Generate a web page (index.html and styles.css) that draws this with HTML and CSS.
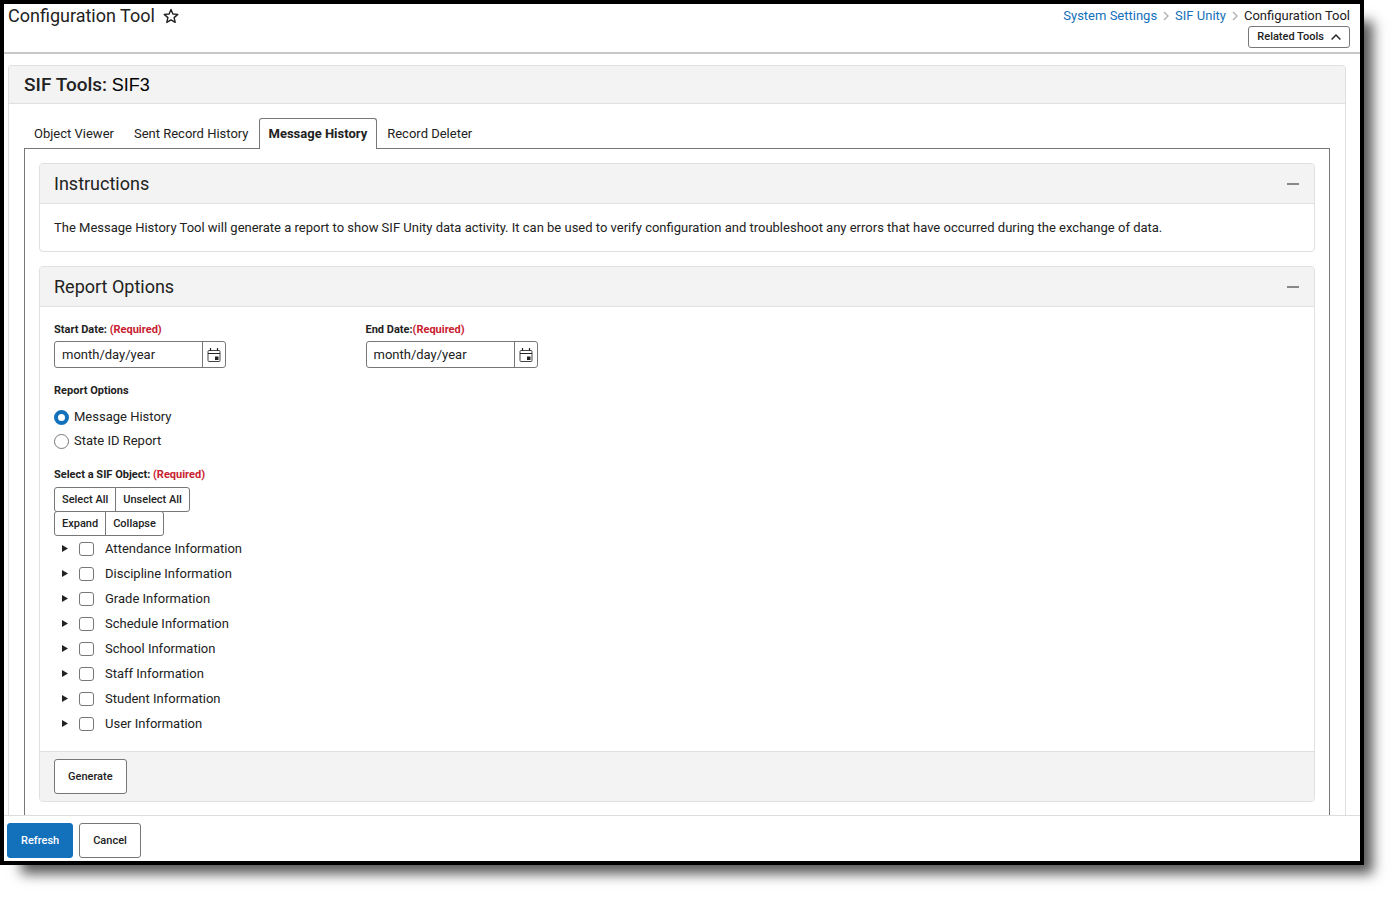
FILE: index.html
```
<!DOCTYPE html>
<html lang="en">
<head>
    <meta charset="UTF-8">
    <meta name="viewport" content="width=device-width, initial-scale=1.0">
    <title>Configuration Tool</title>
    <link rel="stylesheet" href="styles.css">
</head>
<body>
    <div class="window">
        <header class="topbar">
            <div class="title">
                <h1>Configuration Tool</h1>
                <button class="icon-button" type="button" aria-label="Add to favorites">
                    <svg width="16" height="16" viewBox="0 0 16 16"><path d="M8 1.500l1.900 4.500 4.900.400-3.700 3.200 1.100 4.800L8 11.900l-4.200 2.500 1.100-4.800L1.200 6.400l4.900-.4z" fill="none" stroke="#222" stroke-width="1.400" stroke-linejoin="round"/></svg>
                </button>
            </div>
            <div class="topbar-right">
                <nav class="breadcrumbs">
                    <a href="#">System Settings</a>
                    <svg width="6" height="10" viewBox="0 0 6 10"><path d="M1 1l4 4-4 4" fill="none" stroke="#b5b5b5" stroke-width="1.500"/></svg>
                    <a href="#">SIF Unity</a>
                    <svg width="6" height="10" viewBox="0 0 6 10"><path d="M1 1l4 4-4 4" fill="none" stroke="#b5b5b5" stroke-width="1.500"/></svg>
                    <span>Configuration Tool</span>
                </nav>
                <button class="button related" type="button">
                    Related Tools
                    <svg width="10" height="6" viewBox="0 0 10 6"><path d="M.6 5.400L5 1l4.400 4.400" fill="none" stroke="#222" stroke-width="1.400"/></svg>
                </button>
            </div>
        </header>

        <main class="content">
            <section class="panel">
                <h2 class="panel-header">SIF Tools: <span>SIF3</span></h2>
                <div class="panel-body">
                    <div class="tabs" role="tablist">
                        <button class="tab" type="button" role="tab">Object Viewer</button>
                        <button class="tab" type="button" role="tab">Sent Record History</button>
                        <button class="tab active" type="button" role="tab" aria-selected="true">Message History</button>
                        <button class="tab" type="button" role="tab">Record Deleter</button>
                    </div>
                    <div class="tab-panel">
                        <section class="card">
                            <div class="card-header">
                                <h3>Instructions</h3>
                                <button class="icon-button collapse" type="button" aria-label="Collapse Instructions"></button>
                            </div>
                            <p class="instructions">The Message History Tool will generate a report to show SIF Unity data activity. It can be used to verify configuration and troubleshoot any errors that have occurred during the exchange of data.</p>
                        </section>

                        <form class="card">
                            <div class="card-header">
                                <h3>Report Options</h3>
                                <button class="icon-button collapse" type="button" aria-label="Collapse Report Options"></button>
                            </div>
                            <div class="card-body">
                                <div class="dates">
                                    <div>
                                        <label class="label" for="start">Start Date: <span class="required">(Required)</span></label>
                                        <div class="date-box">
                                            <input type="text" id="start" placeholder="month/day/year">
                                            <button type="button" aria-label="Open start date calendar">
                                                <svg width="14" height="14" viewBox="0 0 14 14"><rect x="1" y="2.500" width="12" height="11" rx="1" fill="none" stroke="#444"/><path d="M1 5.500h12M3.500 0v3M10.500 0v3" stroke="#222" stroke-width="1.200"/><path d="M8 8.500h3.500V12H8z" fill="#222"/></svg>
                                            </button>
                                        </div>
                                    </div>
                                    <div>
                                        <label class="label" for="end">End Date:<span class="required">(Required)</span></label>
                                        <div class="date-box">
                                            <input type="text" id="end" placeholder="month/day/year">
                                            <button type="button" aria-label="Open end date calendar">
                                                <svg width="14" height="14" viewBox="0 0 14 14"><rect x="1" y="2.500" width="12" height="11" rx="1" fill="none" stroke="#444"/><path d="M1 5.500h12M3.500 0v3M10.500 0v3" stroke="#222" stroke-width="1.200"/><path d="M8 8.500h3.500V12H8z" fill="#222"/></svg>
                                            </button>
                                        </div>
                                    </div>
                                </div>

                                <fieldset class="radios">
                                    <legend class="label">Report Options</legend>
                                    <label><input type="radio" name="report" checked>Message History</label>
                                    <label><input type="radio" name="report">State ID Report</label>
                                </fieldset>

                                <fieldset class="objects">
                                    <legend class="label">Select a SIF Object: <span class="required">(Required)</span></legend>
                                    <div class="button-group">
                                        <button type="button">Select All</button>
                                        <button type="button">Unselect All</button>
                                    </div>
                                    <div class="button-group">
                                        <button type="button">Expand</button>
                                        <button type="button">Collapse</button>
                                    </div>
                                    <ul class="tree">
                                        <li><button class="arrow" type="button" aria-label="Expand Attendance"></button><label><input type="checkbox">Attendance Information</label></li>
                                        <li><button class="arrow" type="button" aria-label="Expand Discipline"></button><label><input type="checkbox">Discipline Information</label></li>
                                        <li><button class="arrow" type="button" aria-label="Expand Grade"></button><label><input type="checkbox">Grade Information</label></li>
                                        <li><button class="arrow" type="button" aria-label="Expand Schedule"></button><label><input type="checkbox">Schedule Information</label></li>
                                        <li><button class="arrow" type="button" aria-label="Expand School"></button><label><input type="checkbox">School Information</label></li>
                                        <li><button class="arrow" type="button" aria-label="Expand Staff"></button><label><input type="checkbox">Staff Information</label></li>
                                        <li><button class="arrow" type="button" aria-label="Expand Student"></button><label><input type="checkbox">Student Information</label></li>
                                        <li><button class="arrow" type="button" aria-label="Expand User"></button><label><input type="checkbox">User Information</label></li>
                                    </ul>
                                </fieldset>
                            </div>
                            <div class="card-footer">
                                <button class="button" type="button">Generate</button>
                            </div>
                        </form>
                    </div>
                </div>
            </section>
        </main>

        <footer class="actions">
            <button class="button primary" type="button">Refresh</button>
            <button class="button" type="button">Cancel</button>
        </footer>
    </div>
</body>
</html>
```
FILE: styles.css
```
* {
    box-sizing: border-box;
}

body {
    margin: 0;
    padding: 0 34px 34px 0;
    background: #fff;
    color: #222;
    font: 13px/20px Roboto, sans-serif;
}

h1, h2, h3, p, ul, fieldset {
    margin: 0;
    padding: 0;
    border: 0;
}

button, input {
    font: inherit;
    color: inherit;
    margin: 0;
}

a {
    color: #1370bb;
    text-decoration: none;
}

/* Window frame */
.window {
    display: flex;
    flex-direction: column;
    height: calc(100vh - 34px);
    border: 4px solid #000;
    background: #fff;
    box-shadow: 15px 15px 12px -6px rgba(0, 0, 0, 0.65);
}

.topbar {
    display: flex;
    justify-content: space-between;
    flex: none;
    height: 50px;
    padding: 0 10px 0 4px;
    border-bottom: 2px solid #c8c8c8;
}

.title {
    display: flex;
    align-items: center;
    gap: 8px;
    height: 24px;
}

h1, h3 {
    font-size: 18px;
    font-weight: 400;
    line-height: 24px;
}

.icon-button {
    display: flex;
    padding: 0;
    border: 0;
    background: none;
}

.topbar-right {
    display: flex;
    flex-direction: column;
    align-items: flex-end;
    padding-top: 2px;
}

.breadcrumbs {
    display: flex;
    align-items: center;
    gap: 6px;
}

.button {
    height: 35px;
    padding: 0 13px;
    border: 1px solid #777;
    border-radius: 3px;
    background: #fff;
    font-size: 11px;
    font-weight: 500;
}

.related {
    display: flex;
    align-items: center;
    gap: 7px;
    height: 22px;
    padding: 0 8px;
}

.primary {
    border-color: #1370bb;
    background: #1370bb;
    color: #fff;
}

/* Main panel */
.content {
    flex: 1;
    min-height: 0;
    overflow: hidden;
    padding: 11px 14px 0 4px;
}

.panel {
    border: 1px solid #e0e0e0;
    border-radius: 3px;
}

.panel-header {
    height: 38px;
    padding: 0 15px;
    border-bottom: 1px solid #e0e0e0;
    background: #f3f3f3;
    font-size: 19px;
    font-weight: 500;
    line-height: 37px;
}

.panel-header span {
    color: #000;
    font: 18px "Liberation Sans", Arial, sans-serif;
}

.panel-body {
    padding: 14px 15px 0;
}

.tabs {
    display: flex;
    margin-bottom: -1px;
}

.tab {
    height: 31px;
    padding: 0 9px;
    border: 1px solid transparent;
    border-bottom: 0;
    border-radius: 3px 3px 0 0;
    background: none;
}

.active {
    position: relative;
    border-color: #777;
    background: #fff;
    font-weight: 700;
}

.tab-panel {
    display: flex;
    flex-direction: column;
    gap: 14px;
    padding: 14px 14px 40px;
    border: 1px solid #777;
}

/* Cards */
.card {
    overflow: hidden;
    border: 1px solid #e0e0e0;
    border-radius: 4px;
}

.card-header {
    display: flex;
    justify-content: space-between;
    align-items: center;
    height: 40px;
    padding: 0 14px;
    border-bottom: 1px solid #e0e0e0;
    background: #f3f3f3;
}

.collapse {
    width: 14px;
    height: 14px;
    align-items: center;
    justify-content: center;
}

.collapse::before {
    content: "";
    width: 12px;
    height: 2px;
    background: #888;
}

.instructions {
    padding: 14px 14px 13px;
}

.card-body {
    padding: 15px 14px;
}

.label {
    display: block;
    padding: 0;
    font-size: 11px;
    font-weight: 700;
    line-height: 16px;
}

.required {
    color: #c8202f;
}

.dates {
    display: grid;
    grid-template-columns: repeat(4, 1fr);
}

.date-box {
    display: flex;
    width: 172px;
    height: 27px;
    margin-top: 3px;
    border: 1px solid #777;
    border-radius: 3px;
}

.date-box input {
    flex: 1;
    min-width: 0;
    padding: 0 7px;
    border: 0;
    background: none;
}

.date-box input::placeholder {
    color: #222;
    opacity: 1;
}

.date-box button {
    display: flex;
    align-items: center;
    justify-content: center;
    width: 23px;
    padding: 0;
    border: 0;
    border-left: 1px solid #777;
    background: none;
}

.radios {
    margin-top: 15px;
}

.radios legend {
    margin-bottom: 6px;
}

.radios label {
    display: flex;
    align-items: center;
    gap: 5px;
    height: 24px;
}

input[type="radio"], input[type="checkbox"] {
    appearance: none;
    width: 15px;
    height: 15px;
    border: 1px solid #777;
    background: #fff;
}

input[type="radio"] {
    border-radius: 50%;
}

input[type="radio"]:checked {
    border: 4px solid #1370bb;
}

input[type="checkbox"] {
    height: 14px;
    border-radius: 3px;
}

.objects {
    margin-top: 14px;
}

.objects legend {
    margin-bottom: 4px;
}

.button-group {
    display: flex;
}

.button-group + .button-group {
    margin-top: -1px;
}

.button-group button {
    height: 25px;
    padding: 0 7px;
    border: 1px solid #777;
    background: #fff;
    font-size: 11px;
    font-weight: 500;
}

.button-group button:first-child {
    border-radius: 3px 0 0 3px;
}

.button-group button:last-child {
    margin-left: -1px;
    border-radius: 0 3px 3px 0;
}

.tree {
    list-style: none;
}

.tree li {
    display: flex;
    align-items: center;
    gap: 11px;
    height: 25px;
    padding-left: 8px;
}

.tree label {
    display: flex;
    align-items: center;
    gap: 11px;
}

/* Right pointing triangle */
.arrow {
    width: 6px;
    height: 7px;
    padding: 0;
    border: 0;
    background: #222;
    clip-path: polygon(0 0, 100% 50%, 0 100%);
}

.card-footer {
    padding: 7px 14px;
    border-top: 1px solid #e0e0e0;
    background: #f3f3f3;
}

.card-footer .button {
    display: block;
}

/* Bottom bar */
.actions {
    display: flex;
    gap: 6px;
    flex: none;
    height: 46px;
    padding: 7px 3px 0;
    border-top: 1px solid #ddd;
}
```
